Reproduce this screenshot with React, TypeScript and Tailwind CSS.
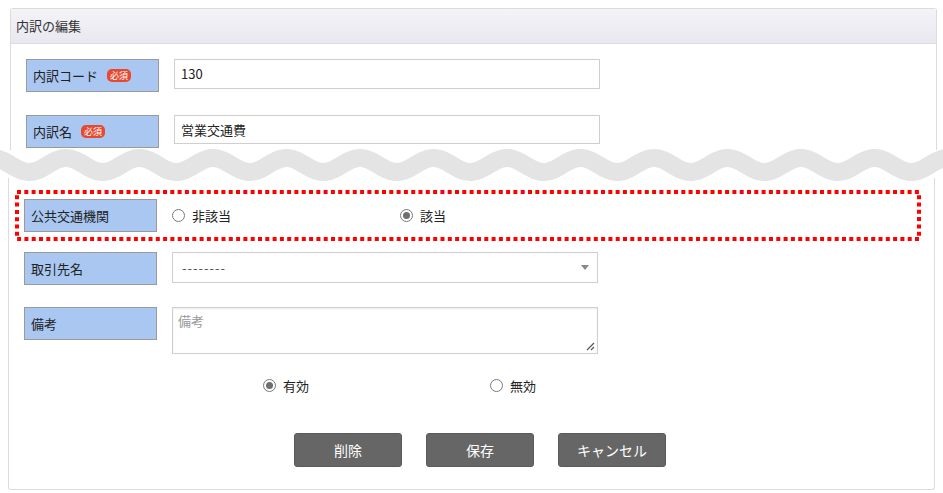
import { ReactNode } from 'react'

const font = { fontFamily: '"Noto Sans CJK JP", "Noto Sans", sans-serif' }

function Badge() {
  return (
    <span className="ml-[9px] inline-flex h-[13px] w-[24px] items-center justify-center rounded-[5px] bg-[#e5492f] text-[9px] leading-none text-white">
      必須
    </span>
  )
}

function Label(props: { children: ReactNode; required?: boolean }) {
  const { children, required = false } = props
  return (
    <div className="flex h-[33px] w-[133px] shrink-0 items-center border border-[#9a9a9a] bg-[#a9c7f1] pl-[6px] text-[13px] leading-none text-[#222]">
      {children}
      {required && <Badge />}
    </div>
  )
}

function Radio(props: { checked?: boolean; label: string }) {
  const { checked = false, label } = props
  return (
    <div className="flex items-center">
      <span className="flex h-[13px] w-[13px] items-center justify-center rounded-full border border-[#7a7a7a] bg-white">
        {checked && <span className="h-[7px] w-[7px] rounded-full bg-[#6f6f6f]" />}
      </span>
      <span className="ml-[7px] text-[13px] leading-none text-[#222]">{label}</span>
    </div>
  )
}

function Wave() {
  const pts: string[] = []
  for (let x = -20; x <= 980; x += 2) {
    const y = 15 - 7 * Math.cos((2 * Math.PI * (x - 66)) / 73.5)
    pts.push(`${x},${y.toFixed(2)}`)
  }
  return (
    <svg className="relative z-10 block h-[28px] w-full overflow-visible" viewBox="0 0 943 28" preserveAspectRatio="none">
      <polyline points={pts.join(' ')} fill="none" stroke="#e4e4e4" strokeWidth="18" />
    </svg>
  )
}

function Button(props: { children: ReactNode }) {
  return (
    <button className="flex h-[34px] w-[108px] items-center justify-center rounded-[3px] border border-[#5a5a5a] bg-[#666666] text-[14px] text-white">
      {props.children}
    </button>
  )
}

export default function App() {
  return (
    <div className="min-h-[493px] bg-white pt-[8px]" style={font}>
      {/* upper part */}
      <div className="ml-[10px] mr-[6px] rounded-t-[3px] border-x border-t border-[#dcdcdc] bg-white">
        <div className="flex h-[35px] items-center border-b border-[#dedde6] bg-gradient-to-b from-[#f4f3f8] to-[#e9e8f0] pl-[5px] text-[13px] text-[#333]">
          内訳の編集
        </div>
        <div className="pb-[2px] pl-[15px] pt-[15px]">
          <div className="flex items-start">
            <Label required>内訳コード</Label>
            <div className="ml-[15px] flex h-[30px] w-[426px] items-center border border-[#cfcfcf] pl-[6px] text-[13px] text-[#222]">
              130
            </div>
          </div>
          <div className="mt-[23px] flex items-start">
            <Label required>内訳名</Label>
            <div className="ml-[15px] flex h-[29px] w-[426px] items-center border border-[#cfcfcf] pl-[6px] text-[13px] text-[#222]">
              営業交通費
            </div>
          </div>
        </div>
      </div>

      <Wave />

      {/* lower part */}
      <div className="ml-[8px] mr-[8px] h-[312px] rounded-b-[3px] border-x border-b border-[#dcdcdc] pl-[6px] pt-[12px]">
        <div className="relative flex h-[51px] w-[906px] items-center pl-[9px]">
          <svg className="absolute inset-0" width="906" height="51">
            <rect x="2" y="2" width="902" height="47" fill="none" stroke="#ff0000" strokeWidth="4" strokeDasharray="4 3.3" />
          </svg>
          <div className="flex w-full items-center">
            <Label>公共交通機関</Label>
            <div className="ml-[15px] w-[228px]">
              <Radio label="非該当" />
            </div>
            <Radio checked label="該当" />
          </div>
        </div>

        <div className="mt-[11px] flex items-start pl-[9px]">
          <Label>取引先名</Label>
          <div className="ml-[15px] flex h-[31px] w-[426px] items-center justify-between border border-[#cfcfcf] pl-[9px] pr-[8px] text-[13px] text-[#555]">
            <span className="tracking-[1px]">--------</span>
            <span className="h-0 w-0 border-x-[4px] border-t-[5px] border-x-transparent border-t-[#888]" />
          </div>
        </div>

        <div className="mt-[22px] flex items-start pl-[9px]">
          <Label>備考</Label>
          <div className="relative ml-[15px] h-[47px] w-[426px] border border-[#cfcfcf] pl-[5px] pt-[6px] text-[13px] leading-none text-[#999] shadow-[inset_0_1px_2px_rgba(0,0,0,0.08)]">
            備考
            <svg className="absolute bottom-[2px] right-[2px]" width="9" height="9" viewBox="0 0 9 9">
              <path d="M8 1L1 8M8 5L5 8" stroke="#555" strokeWidth="1.2" />
            </svg>
          </div>
        </div>

        <div className="mt-[25px] flex items-center pl-[248px]">
          <div className="w-[227px]">
            <Radio checked label="有効" />
          </div>
          <Radio label="無効" />
        </div>

        <div className="mt-[41px] flex gap-[24px] pl-[279px]">
          <Button>削除</Button>
          <Button>保存</Button>
          <Button>キャンセル</Button>
        </div>
      </div>
    </div>
  )
}
